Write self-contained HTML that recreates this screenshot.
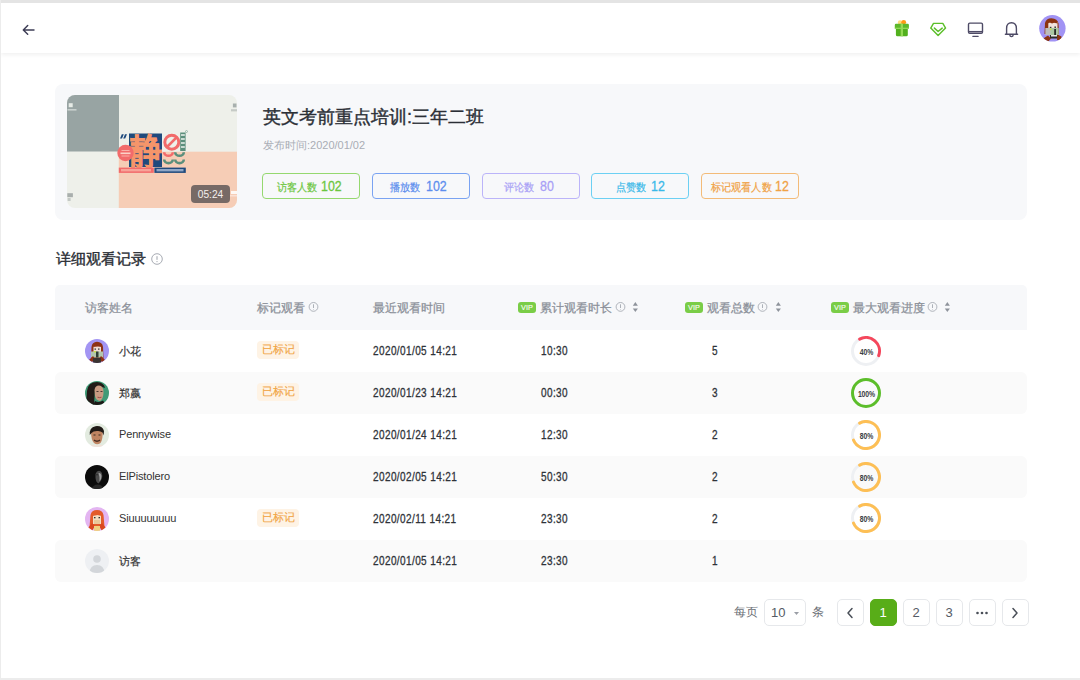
<!DOCTYPE html>
<html><head><meta charset="utf-8">
<style>
*{margin:0;padding:0;box-sizing:border-box}
html,body{width:1080px;height:680px;overflow:hidden;background:#fff;font-family:"Liberation Sans",sans-serif}
.abs{position:absolute}
#frame{position:absolute;left:0;top:0;width:1080px;height:680px;background:#fff}
#topb{position:absolute;left:0;top:0;width:1080px;height:3px;background:#e4e4e4}
#leftb{position:absolute;left:0;top:0;width:1px;height:680px;background:#ececec}
#botb{position:absolute;left:0;top:678px;width:1080px;height:2px;background:#ececec}
#hdr{position:absolute;left:1px;top:3px;width:1079px;height:50px;background:#fff;box-shadow:0 2px 4px rgba(0,0,0,0.06)}
.card{position:absolute;left:55px;top:84px;width:972px;height:136px;background:#f7f8fa;border-radius:8px}
.thumb{position:absolute;left:67px;top:95px;width:170px;height:113px;border-radius:8px;overflow:hidden}
.title{position:absolute;left:263px;top:105px;font-size:18px;line-height:24px;color:#2b2f36;-webkit-text-stroke:0.4px #2b2f36;white-space:nowrap}
.sub{position:absolute;left:263px;top:138px;font-size:11px;line-height:14px;color:#a9adb5;white-space:nowrap}
.badge{position:absolute;top:173px;width:98px;height:26px;border:1px solid;border-radius:4px}
.bl{position:absolute;top:179.5px;font-size:11px;line-height:14px;white-space:nowrap;-webkit-text-stroke:0.2px currentColor;transform:scaleX(.92);transform-origin:0 0}
.bn{position:absolute;top:177px;font-size:15.5px;line-height:17px;-webkit-text-stroke:0.3px currentColor;transform:scaleX(.8);transform-origin:0 0;white-space:nowrap}
.sect{position:absolute;left:56px;top:248.5px;font-size:14.7px;line-height:20px;color:#2b2f36;-webkit-text-stroke:0.4px #2b2f36;white-space:nowrap}
.thead{position:absolute;left:55px;top:285px;width:972px;height:44.6px;background:#f7f8fa;border-radius:5px 5px 0 0}
.th{position:absolute;top:300.6px;font-size:12px;line-height:14px;color:#8b9099;-webkit-text-stroke:0.25px #8b9099;white-space:nowrap}
.row{position:absolute;left:55px;width:972px;height:42px;border-radius:6px}
.row.g{background:#fafafa}
.av{position:absolute;left:85px;width:24px;height:24px;border-radius:50%;overflow:hidden}
.nm{position:absolute;left:119px;font-size:11px;line-height:14px;color:#333;white-space:nowrap}
.nm.cj{font-size:10.5px;left:119.3px;-webkit-text-stroke:0.2px #333}
.tag{position:absolute;left:257px;width:42px;height:18px;border-radius:4px;background:#fef3e5;color:#f1a443;font-size:10.5px;line-height:17px;text-align:center;-webkit-text-stroke:0.15px #f1a443}
.dt{position:absolute;left:373px;font-size:12.5px;line-height:14px;color:#2e3238;-webkit-text-stroke:0.3px #2e3238;letter-spacing:0.5px;transform:scaleX(.8);transform-origin:0 0;white-space:nowrap}
.du{position:absolute;left:541px;font-size:12.5px;line-height:14px;color:#2e3238;-webkit-text-stroke:0.3px #2e3238;letter-spacing:0.5px;transform:scaleX(.8);transform-origin:0 0;white-space:nowrap}
.ct{position:absolute;left:712px;font-size:12.5px;line-height:14px;color:#2e3238;-webkit-text-stroke:0.3px #2e3238;letter-spacing:0.5px;transform:scaleX(.8);transform-origin:0 0;white-space:nowrap}
.pg{position:absolute;left:851px;width:30px;height:30px}
.pbtn{position:absolute;top:599px;width:27px;height:27px;border:1px solid #e6e8eb;border-radius:5px;display:flex;align-items:center;justify-content:center;font-size:13px;color:#555b65}
</style></head><body>
<div id="frame"></div>
<div id="hdr"></div>
<div id="topb"></div>
<div id="leftb"></div>
<div id="botb"></div>

<!-- back arrow -->
<svg class="abs" style="left:20px;top:22px" width="18" height="16" viewBox="0 0 18 16">
<path d="M3.5 8H14M7.7 3.6L3.3 8L7.7 12.2" fill="none" stroke="#3d3d55" stroke-width="1.45" stroke-linecap="round" stroke-linejoin="round"/>
</svg>


<!-- gift -->
<svg class="abs" style="left:893px;top:19px" width="18" height="19" viewBox="0 0 18 19">
<circle cx="7.1" cy="3.6" r="2.3" fill="#ffdc7a"/>
<circle cx="10.7" cy="3.3" r="2.4" fill="#ff9a14"/>
<path d="M3 4.7H14.7Q15.9 4.7 15.9 5.9V9.5H1.8V5.9Q1.8 4.7 3 4.7Z" fill="#5cb82a"/>
<path d="M2.9 9.5H14.8V15.8Q14.8 17.3 13.3 17.3H4.4Q2.9 17.3 2.9 15.8Z" fill="#52b01e"/>
<rect x="7.7" y="4.7" width="2.3" height="12.6" fill="#93db55"/>
<rect x="1.8" y="8.7" width="14.1" height="1.2" fill="#93db55"/>
</svg>
<!-- diamond -->
<svg class="abs" style="left:929px;top:21px" width="18" height="17" viewBox="0 0 18 17">
<path d="M4.5 2.35H13.8L16.55 7.1L9.1 14.55L1.75 7.1Z" fill="none" stroke="#5cbf2a" stroke-width="1.45" stroke-linejoin="round"/>
<path d="M5.4 7.1L9.1 10.5L13.2 7.1" fill="none" stroke="#5cbf2a" stroke-width="1.45" stroke-linecap="round" stroke-linejoin="round"/>
</svg>
<!-- monitor -->
<svg class="abs" style="left:966px;top:21px" width="18" height="17" viewBox="0 0 18 17">
<rect x="2.5" y="2.1" width="14" height="10.1" rx="1.3" fill="none" stroke="#4e4b66" stroke-width="1.4"/>
<path d="M2.5 10.6H16.5" stroke="#4e4b66" stroke-width="1.3"/>
<path d="M6.8 15.3H12.2" stroke="#4e4b66" stroke-width="1.2" stroke-linecap="round"/>
</svg>
<!-- bell -->
<svg class="abs" style="left:1003px;top:20px" width="17" height="18" viewBox="0 0 17 18">
<path d="M2.4 14.2H14.6M3.6 14.2V8.5Q3.6 2.7 8.5 2.7Q13.4 2.7 13.4 8.5V14.2" fill="none" stroke="#4e4b66" stroke-width="1.4" stroke-linecap="round" stroke-linejoin="round"/>
<path d="M6.7 14.6Q6.9 16.6 8.5 16.6Q10.1 16.6 10.3 14.6" fill="none" stroke="#4e4b66" stroke-width="1.3"/>
</svg>
<!-- avatar top -->
<svg class="abs" style="left:1038.5px;top:15.2px" width="27" height="27" viewBox="0 0 27 27">
<defs><clipPath id="avc"><circle cx="13.4" cy="13.3" r="13.2"/></clipPath></defs>
<g clip-path="url(#avc)">
<rect width="27" height="27" fill="#a193f4"/>
<path d="M5.5 19L6 8Q7 3.3 12.5 3.3Q18.5 3.5 19.5 8.5L20 19Z" fill="#8c3412"/>
<rect x="9.3" y="7.3" width="9.2" height="6.6" fill="#f1e3dc"/>
<path d="M8.5 8.5Q9.5 5.2 13 5.2Q17.5 5.2 18.8 8.5L15 7.8L13 8.6L11 7.6Z" fill="#8c3412"/>
<rect x="10.8" y="11.8" width="1.6" height="1.4" fill="#333"/><rect x="15.4" y="11.5" width="1.6" height="1.4" fill="#333"/>
<rect x="6.3" y="13" width="6" height="7" fill="#bdbdbb"/>
<rect x="11.5" y="13" width="8.2" height="7" fill="#a9c6a3"/>
<rect x="15.2" y="14" width="1.8" height="8" fill="#2a2a2a"/>
<circle cx="11.6" cy="14.2" r="1" fill="#c4e04c"/>
<rect x="11" y="20" width="9" height="3.5" fill="#2b2b2b"/>
<rect x="12" y="20" width="6" height="1.5" fill="#e8e8e8"/>
<path d="M3.5 24L9 20.5L12 23.5L9 27L4 27Z" fill="#8c3412"/>
<path d="M18.5 19.5L22.5 21.5L22 25.5L18 25Z" fill="#8c3412"/>
</g>
</svg>

<div class="card"></div>
<div class="thumb">
<svg width="170" height="113" viewBox="0 0 170 113">
<rect width="170" height="113" fill="#eef0ea"/>
<rect x="0" y="0" width="52" height="56.5" fill="#98a4a3"/>
<rect x="51.8" y="56.7" width="118.2" height="56.3" fill="#f6cdb6"/>
<rect x="1.7" y="8.2" width="4" height="4" fill="#e6ebe6"/>
<rect x="0.5" y="14" width="9" height="1.6" fill="#c8d0ce"/>
<rect x="165.9" y="8.5" width="3.6" height="3.9" fill="#a8b0ae"/>
<rect x="164" y="14.2" width="6" height="2.2" fill="#c5cac6"/>
<rect x="0.3" y="98.2" width="5.6" height="4" fill="#a9afad"/>
<rect x="0.6" y="103" width="3" height="3" fill="#c3c8c5"/>
<path d="M54.8 39.2L56.8 39.2L55 43.6L53 43.6Z M58 39.2L60 39.2L58.2 43.6L56.2 43.6Z" fill="#1f4a7d"/>
<rect x="62" y="38.5" width="33" height="33.5" fill="#1f4a7d"/>
<text x="79" y="69" font-size="35" fill="#f5956a" stroke="#f5956a" stroke-width="0.7" font-weight="bold" text-anchor="middle" transform="translate(6.3 69) scale(.92 1.06) translate(0 -69)">&#38745;</text>
<circle cx="58.5" cy="58" r="8.2" fill="#f26b6b"/>
<rect x="54.5" y="55" width="8" height="1" fill="#f9b0a8"/>
<rect x="53.5" y="57.5" width="10" height="1.6" fill="#fcd2c8"/>
<rect x="54.5" y="60.5" width="8" height="1" fill="#f9b0a8"/>
<rect x="51.8" y="72.6" width="35" height="5.3" fill="#f26b6b"/>
<rect x="87.4" y="72.6" width="31.4" height="5.3" fill="#1f4a7d"/>
<rect x="54" y="74" width="30" height="2.4" fill="#f7a398"/>
<rect x="89.5" y="74" width="27" height="2.4" fill="#8fa6c6"/>
<circle cx="104.8" cy="47.2" r="7" fill="none" stroke="#f26b6b" stroke-width="3"/>
<path d="M100 52L109.6 42.4" stroke="#f26b6b" stroke-width="2.6"/>
<rect x="113.2" y="37.5" width="5.4" height="18.5" fill="#5b8f7c"/>
<rect x="114" y="39" width="3.8" height="2" fill="#c9dad2"/>
<rect x="114" y="43" width="3.8" height="2" fill="#c9dad2"/>
<rect x="114" y="47" width="3.8" height="2" fill="#c9dad2"/>
<rect x="114" y="51" width="3.8" height="2" fill="#c9dad2"/>
<circle cx="119.5" cy="36.5" r="1" fill="none" stroke="#5b8f7c" stroke-width=".5"/>
<path d="M97.2 57.2A4.3 3.6 0 0 0 105.8 57.2" fill="none" stroke="#f26b6b" stroke-width="2.6"/>
<path d="M108.2 57.2A4.3 3.6 0 0 0 116.8 57.2" fill="none" stroke="#5b8f7c" stroke-width="2.6"/>
<path d="M97.2 64.5A4.3 3.6 0 0 0 105.8 64.5" fill="none" stroke="#5b8f7c" stroke-width="2.6"/>
<path d="M108.2 64.5A4.3 3.6 0 0 0 116.8 64.5" fill="none" stroke="#5b8f7c" stroke-width="2.6"/>
<circle cx="91.5" cy="68.5" r="1.3" fill="none" stroke="#1f4a7d" stroke-width=".6"/>
<rect x="164" y="96" width="6" height="3" fill="#fff" opacity=".85"/>
<rect x="161" y="100" width="9" height="1.5" fill="#fbe2d6"/>
<rect x="124" y="90" width="39" height="18" rx="4" fill="#776a66"/>
<text x="143.5" y="102.6" font-size="10.2" fill="#f4f0ee" text-anchor="middle">05:24</text>
</svg>
</div>
<div class="title">英文考前重点培训:三年二班</div>
<div class="sub">发布时间:2020/01/02</div>

<div class="badge" style="left:262px;border-color:#95d86f"></div>
<div class="bl" style="left:276.5px;color:#6cc640">访客人数</div>
<div class="bn" style="left:321px;color:#6cc640">102</div>
<div class="badge" style="left:372px;border-color:#7aa3f2"></div>
<div class="bl" style="left:389.8px;color:#5d8eee">播放数</div>
<div class="bn" style="left:426px;color:#5d8eee">102</div>
<div class="badge" style="left:482px;border-color:#bbb4f9"></div>
<div class="bl" style="left:504.2px;color:#a89ff6">评论数</div>
<div class="bn" style="left:540.3px;color:#a89ff6">80</div>
<div class="badge" style="left:591px;border-color:#6cd0f3"></div>
<div class="bl" style="left:615.8px;color:#3ab9e9">点赞数</div>
<div class="bn" style="left:651.3px;color:#3ab9e9">12</div>
<div class="badge" style="left:701px;border-color:#f3bb78"></div>
<div class="bl" style="left:711px;color:#f0a245">标记观看人数</div>
<div class="bn" style="left:775.4px;color:#f0a245">12</div>
<div class="sect">详细观看记录</div>
<svg class="abs" style="left:150.5px;top:252.5px" width="12" height="12" viewBox="0 0 12 12"><circle cx="6" cy="6" r="5.3" fill="none" stroke="#9ea3ab" stroke-width="0.9"/><path d="M6 3.2V6.8" stroke="#9ea3ab" stroke-width="1"/><circle cx="6" cy="8.6" r="0.6" fill="#9ea3ab"/></svg>
<div class="thead"></div>
<div class="th" style="left:85px">访客姓名</div>
<div class="th" style="left:257px">标记观看</div>
<svg class="abs" style="left:308px;top:301px" width="12" height="12" viewBox="0 0 12 12"><circle cx="5.5" cy="5.9" r="4.4" fill="none" stroke="#a3a8b0" stroke-width="0.85"/><path d="M5.5 3.3V7" stroke="#a3a8b0" stroke-width="0.9"/><circle cx="5.5" cy="8.4" r="0.45" fill="#a3a8b0"/></svg>
<div class="th" style="left:373px">最近观看时间</div>
<div class="abs" style="left:518px;top:302px;width:18px;height:10.5px;border-radius:3px;background:#7acd47;color:#f4fbef;font-size:7.3px;line-height:11.5px;text-align:center;-webkit-text-stroke:0.15px #f4fbef;letter-spacing:0px">VIP</div>
<div class="th" style="left:540px">累计观看时长</div>
<svg class="abs" style="left:615px;top:301px" width="12" height="12" viewBox="0 0 12 12"><circle cx="5.5" cy="5.9" r="4.4" fill="none" stroke="#a3a8b0" stroke-width="0.85"/><path d="M5.5 3.3V7" stroke="#a3a8b0" stroke-width="0.9"/><circle cx="5.5" cy="8.4" r="0.45" fill="#a3a8b0"/></svg>
<svg class="abs" style="left:632px;top:301px" width="8" height="12" viewBox="0 0 8 12"><path d="M0.8 4.7H5.9L3.35 1.1Z" fill="#8e939b"/><path d="M0.8 7.5H5.9L3.35 10.9Z" fill="#8e939b"/></svg>
<div class="abs" style="left:685px;top:302px;width:18px;height:10.5px;border-radius:3px;background:#7acd47;color:#f4fbef;font-size:7.3px;line-height:11.5px;text-align:center;-webkit-text-stroke:0.15px #f4fbef;letter-spacing:0px">VIP</div>
<div class="th" style="left:707px">观看总数</div>
<svg class="abs" style="left:757px;top:301px" width="12" height="12" viewBox="0 0 12 12"><circle cx="5.5" cy="5.9" r="4.4" fill="none" stroke="#a3a8b0" stroke-width="0.85"/><path d="M5.5 3.3V7" stroke="#a3a8b0" stroke-width="0.9"/><circle cx="5.5" cy="8.4" r="0.45" fill="#a3a8b0"/></svg>
<svg class="abs" style="left:775px;top:301px" width="8" height="12" viewBox="0 0 8 12"><path d="M0.8 4.7H5.9L3.35 1.1Z" fill="#8e939b"/><path d="M0.8 7.5H5.9L3.35 10.9Z" fill="#8e939b"/></svg>
<div class="abs" style="left:831px;top:302px;width:18px;height:10.5px;border-radius:3px;background:#7acd47;color:#f4fbef;font-size:7.3px;line-height:11.5px;text-align:center;-webkit-text-stroke:0.15px #f4fbef;letter-spacing:0px">VIP</div>
<div class="th" style="left:853px">最大观看进度</div>
<svg class="abs" style="left:927px;top:301px" width="12" height="12" viewBox="0 0 12 12"><circle cx="5.5" cy="5.9" r="4.4" fill="none" stroke="#a3a8b0" stroke-width="0.85"/><path d="M5.5 3.3V7" stroke="#a3a8b0" stroke-width="0.9"/><circle cx="5.5" cy="8.4" r="0.45" fill="#a3a8b0"/></svg>
<svg class="abs" style="left:944px;top:301px" width="8" height="12" viewBox="0 0 8 12"><path d="M0.8 4.7H5.9L3.35 1.1Z" fill="#8e939b"/><path d="M0.8 7.5H5.9L3.35 10.9Z" fill="#8e939b"/></svg>
<div class="row" style="top:329.5px"></div>
<div class="av" id="av0" style="top:338.5px"><svg width="24" height="24" viewBox="0 0 24 24"><rect width="24" height="24" fill="#a395f3"/>
<path d="M6 22L6.5 8Q7 3 12 2.8Q17.5 3 18 8L18.5 20Z" fill="#8e3214"/>
<rect x="8.5" y="7.5" width="7.5" height="7" fill="#f1ddd3"/>
<path d="M8 8Q9.5 4.5 12 4.5Q15.5 4.5 16.5 8L13 7Z" fill="#8e3214"/>
<rect x="9.5" y="9.5" width="1.5" height="1.2" fill="#333"/><rect x="13" y="9.5" width="1.5" height="1.2" fill="#333"/>
<rect x="6" y="12.5" width="12" height="6" fill="#b3c7ae"/>
<rect x="11" y="12.5" width="2.5" height="6" fill="#2f3f35"/>
<rect x="9" y="12" width="2" height="1.5" fill="#c8e04a"/>
<path d="M4 21L8 17L10 20L7 23Z" fill="#8e3214"/><path d="M20 21L16 17L14 20L17 23Z" fill="#8e3214"/>
<rect x="8" y="19" width="8" height="5" fill="#3b3431"/></svg></div>
<div class="nm cj" style="top:343.5px">小花</div>
<div class="tag" style="top:340.5px">已标记</div>
<div class="dt" style="top:343.5px">2020/01/05 14:21</div>
<div class="du" style="top:343.5px">10:30</div>
<div class="ct" style="top:343.5px">5</div>
<svg class="abs" style="left:850.5px;top:335.5px" width="30" height="30" viewBox="0 0 30 30"><circle cx="15" cy="15" r="13.5" fill="none" stroke="#eef0f3" stroke-width="3"/><path d="M8.66 3.08A13.5 13.5 0 0 1 27.69 19.62" fill="none" stroke="#f5475c" stroke-width="3" stroke-linecap="round"/><text x="15" y="18.6" font-size="9.5" font-weight="bold" fill="#3a3d42" text-anchor="middle" transform="translate(15.5 0) scale(.72 1) translate(-15 0)" style="letter-spacing:-0.1px">40%</text></svg>
<div class="row g" style="top:371.5px"></div>
<div class="av" id="av1" style="top:380.5px"><svg width="24" height="24" viewBox="0 0 24 24"><rect width="24" height="24" fill="#3f9a76"/>
<path d="M1 24L2 10Q3 1 12 1Q19 1.5 20 7L17 6Q12 4 10 8L9 24Z" fill="#221a17"/>
<path d="M9.5 9Q10 4.5 14 4.5Q18.5 5 18.5 11Q18.5 17.5 15 20Q11 19.5 10 15Z" fill="#c89a82"/>
<rect x="11.5" y="10" width="2" height=".9" fill="#3a2a26"/><rect x="15.5" y="10" width="2" height=".9" fill="#3a2a26"/>
<path d="M12.5 16.2Q14.5 17 16.5 16.2" stroke="#a04848" stroke-width="1" fill="none"/>
<path d="M8 24L10 20Q14 22 18 19.5L21 24Z" fill="#1d1816"/></svg></div>
<div class="nm cj" style="top:385.5px">郑嬴</div>
<div class="tag" style="top:382.5px">已标记</div>
<div class="dt" style="top:385.5px">2020/01/23 14:21</div>
<div class="du" style="top:385.5px">00:30</div>
<div class="ct" style="top:385.5px">3</div>
<svg class="abs" style="left:850.5px;top:378.0px" width="30" height="30" viewBox="0 0 30 30"><circle cx="15" cy="15" r="13.5" fill="none" stroke="#eef0f3" stroke-width="3"/><circle cx="15" cy="15" r="13.5" fill="none" stroke="#5cbe2a" stroke-width="3"/><text x="15" y="18.6" font-size="9.5" font-weight="bold" fill="#3a3d42" text-anchor="middle" transform="translate(15.5 0) scale(.72 1) translate(-15 0)" style="letter-spacing:-0.1px">100%</text></svg>
<div class="row" style="top:413.5px"></div>
<div class="av" id="av2" style="top:422.5px"><svg width="24" height="24" viewBox="0 0 24 24"><rect width="24" height="24" fill="#e3ebe0"/>
<path d="M6 8Q6 17 9 20Q12 22.5 15.5 20Q18 16.5 17.8 7Z" fill="#bf8462"/>
<path d="M4.8 12Q4 4.5 10.5 3.2Q17.5 2.5 19 8L18.6 12.5L17.5 9.5Q15 7.5 12 8Q8 8 6.5 10Z" fill="#201a17"/>
<path d="M9 17.2Q12 19.2 15 17.2" stroke="#4a2e22" stroke-width="1.4" fill="none"/>
<rect x="8.5" y="11.5" width="2" height="1" fill="#3a2a20"/><rect x="13.5" y="11.5" width="2" height="1" fill="#3a2a20"/>
<path d="M3 24Q8 20.5 12 22.5Q16 20.5 21 24Z" fill="#efe2da"/></svg></div>
<div class="nm" style="top:426.5px;letter-spacing:-0.15px">Pennywise</div>
<div class="dt" style="top:427.5px">2020/01/24 14:21</div>
<div class="du" style="top:427.5px">12:30</div>
<div class="ct" style="top:427.5px">2</div>
<svg class="abs" style="left:850.5px;top:419.5px" width="30" height="30" viewBox="0 0 30 30"><circle cx="15" cy="15" r="13.5" fill="none" stroke="#eef0f3" stroke-width="3"/><path d="M8.66 3.08A13.5 13.5 0 1 1 2.48 20.06" fill="none" stroke="#fdbf55" stroke-width="3" stroke-linecap="round"/><text x="15" y="18.6" font-size="9.5" font-weight="bold" fill="#3a3d42" text-anchor="middle" transform="translate(15.5 0) scale(.72 1) translate(-15 0)" style="letter-spacing:-0.1px">80%</text></svg>
<div class="row g" style="top:455.5px"></div>
<div class="av" id="av3" style="top:464.5px"><svg width="24" height="24" viewBox="0 0 24 24"><rect width="24" height="24" fill="#0b0b0b"/>
<path d="M10.5 9Q12 5 15 6Q18 7.5 17 13Q16 17 13.5 18.5Q11 17.5 10.5 13Z" fill="#4a4a4a"/>
<path d="M13.5 8Q16 7.5 16.5 11Q16.5 15 14.5 16.5Q15 12 13.5 8Z" fill="#a0a0a0"/>
<path d="M11 10Q12 9 13 10" stroke="#222" stroke-width=".8" fill="none"/>
<path d="M6 24Q9 19 13 19.5Q17 19.5 19 24Z" fill="#262626"/></svg></div>
<div class="nm" style="top:468.5px;letter-spacing:-0.15px">ElPistolero</div>
<div class="dt" style="top:469.5px">2020/02/05 14:21</div>
<div class="du" style="top:469.5px">50:30</div>
<div class="ct" style="top:469.5px">2</div>
<svg class="abs" style="left:850.5px;top:461.5px" width="30" height="30" viewBox="0 0 30 30"><circle cx="15" cy="15" r="13.5" fill="none" stroke="#eef0f3" stroke-width="3"/><path d="M8.66 3.08A13.5 13.5 0 1 1 2.48 20.06" fill="none" stroke="#fdbf55" stroke-width="3" stroke-linecap="round"/><text x="15" y="18.6" font-size="9.5" font-weight="bold" fill="#3a3d42" text-anchor="middle" transform="translate(15.5 0) scale(.72 1) translate(-15 0)" style="letter-spacing:-0.1px">80%</text></svg>
<div class="row" style="top:497.5px"></div>
<div class="av" id="av4" style="top:506.5px"><svg width="24" height="24" viewBox="0 0 24 24"><rect width="24" height="24" fill="#e3b5f1"/>
<path d="M4.5 20L5.5 8Q6.5 3 12 3Q17.5 3 18.5 8L19.5 20Z" fill="#e35b2a"/>
<rect x="8" y="8" width="8" height="9" fill="#f3dcc0"/>
<path d="M7.5 9Q9 5.5 12 5.5Q15.5 5.5 16.5 9L12.5 8Z" fill="#e35b2a"/>
<rect x="9" y="10" width="1.5" height="1.3" fill="#333"/><rect x="13.5" y="10" width="1.5" height="1.3" fill="#333"/>
<rect x="9" y="13" width="6" height="4" fill="#e9c99a"/>
<path d="M3 21L7 16L10 19L7 24Z" fill="#d9481f"/><path d="M21 21L17 16L14 19L17 24Z" fill="#d9481f"/>
<rect x="9" y="19" width="6" height="5" fill="#f0d080"/></svg></div>
<div class="nm" style="top:510.5px;letter-spacing:-0.15px">Siuuuuuuuu</div>
<div class="tag" style="top:508.5px">已标记</div>
<div class="dt" style="top:511.5px">2020/02/11 14:21</div>
<div class="du" style="top:511.5px">23:30</div>
<div class="ct" style="top:511.5px">2</div>
<svg class="abs" style="left:850.5px;top:502.5px" width="30" height="30" viewBox="0 0 30 30"><circle cx="15" cy="15" r="13.5" fill="none" stroke="#eef0f3" stroke-width="3"/><path d="M8.66 3.08A13.5 13.5 0 1 1 2.48 20.06" fill="none" stroke="#fdbf55" stroke-width="3" stroke-linecap="round"/><text x="15" y="18.6" font-size="9.5" font-weight="bold" fill="#3a3d42" text-anchor="middle" transform="translate(15.5 0) scale(.72 1) translate(-15 0)" style="letter-spacing:-0.1px">80%</text></svg>
<div class="row g" style="top:539.5px"></div>
<div class="av" id="av5" style="top:548.5px"><svg width="24" height="24" viewBox="0 0 24 24"><rect width="24" height="24" fill="#eef0f3"/>
<circle cx="12" cy="10" r="3.8" fill="#d3d6da"/>
<path d="M4.5 24Q5 16 12 16Q19 16 19.5 24Z" fill="#d3d6da"/></svg></div>
<div class="nm cj" style="top:553.5px">访客</div>
<div class="dt" style="top:553.5px">2020/01/05 14:21</div>
<div class="du" style="top:553.5px">23:30</div>
<div class="ct" style="top:553.5px">1</div>

<div class="abs" style="left:734px;top:605px;font-size:12px;line-height:14px;color:#6b6f76">每页</div>
<div class="abs" style="left:764px;top:599px;width:42px;height:27px;border:1px solid #e6e8eb;border-radius:5px"></div>
<div class="abs" style="left:771px;top:605px;font-size:13px;line-height:15px;color:#555b65">10</div>
<svg class="abs" style="left:793px;top:611px" width="7" height="5" viewBox="0 0 7 5"><path d="M1 1H6L3.5 4Z" fill="#9a9ea6"/></svg>
<div class="abs" style="left:812px;top:605px;font-size:12px;line-height:14px;color:#6b6f76">条</div>
<div class="pbtn" style="left:836.5px"><svg width="8" height="12" viewBox="0 0 8 12"><path d="M6 1.5L2 6L6 10.5" fill="none" stroke="#4a4f58" stroke-width="1.5" stroke-linecap="round" stroke-linejoin="round"/></svg></div>
<div class="pbtn" style="left:869.5px;background:#58ad18;border-color:#58ad18;color:#fff">1</div>
<div class="pbtn" style="left:902.5px">2</div>
<div class="pbtn" style="left:935.5px">3</div>
<div class="pbtn" style="left:968.5px"><svg width="14" height="4" viewBox="0 0 14 4"><circle cx="2.5" cy="2" r="1.3" fill="#4a4f58"/><circle cx="7" cy="2" r="1.3" fill="#4a4f58"/><circle cx="11.5" cy="2" r="1.3" fill="#4a4f58"/></svg></div>
<div class="pbtn" style="left:1001.5px"><svg width="8" height="12" viewBox="0 0 8 12"><path d="M2 1.5L6 6L2 10.5" fill="none" stroke="#4a4f58" stroke-width="1.5" stroke-linecap="round" stroke-linejoin="round"/></svg></div>
</body></html>
